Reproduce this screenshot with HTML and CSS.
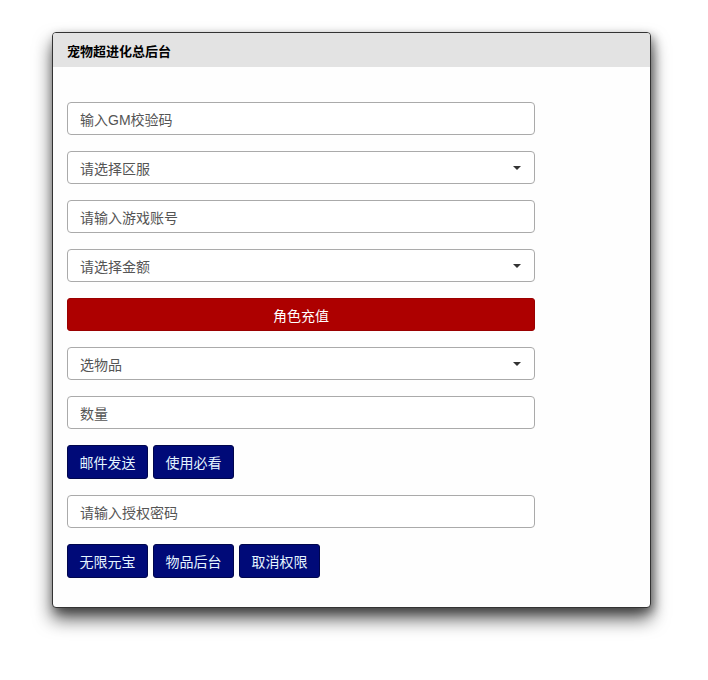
FILE: index.html
```html
<!DOCTYPE html>
<html lang="zh-CN">
<head>
  <meta charset="UTF-8">
  <meta name="viewport" content="width=device-width, initial-scale=1.0">
  <title>宠物超进化总后台</title>
  <link rel="stylesheet" href="styles.css">
</head>
<body>
  <div class="panel">
    <div class="panel-head">宠物超进化总后台</div>
    <div class="panel-body">
      <div class="field">输入GM校验码</div>
      <div class="field select"><span>请选择区服</span><i class="caret"></i></div>
      <div class="field">请输入游戏账号</div>
      <div class="field select"><span>请选择金额</span><i class="caret"></i></div>
      <div class="btn-red">角色充值</div>
      <div class="field select"><span>选物品</span><i class="caret"></i></div>
      <div class="field">数量</div>
      <div class="btn-row">
        <div class="btn">邮件发送</div>
        <div class="btn">使用必看</div>
      </div>
      <div class="field">请输入授权密码</div>
      <div class="btn-row">
        <div class="btn">无限元宝</div>
        <div class="btn">物品后台</div>
        <div class="btn">取消权限</div>
      </div>
    </div>
  </div>
</body>
</html>
```
FILE: styles.css
```css
* {
  padding: 0;
  margin: 0;
  box-sizing: border-box;
}

html,
body {
  height: 100%;
}

body {
  background: #ffffff;
  font-family: "Liberation Sans", "Noto Sans CJK SC", sans-serif;
  font-size: 14px;
  padding-top: 32px;
}

.panel {
  width: 599px;
  height: 576px;
  margin-left: 52px;
  background: #fefefe;
  border: 1px solid #333;
  border-radius: 4px;
  box-shadow: 0 11px 18px rgba(0, 0, 0, .65), 3px 4px 10px rgba(0, 0, 0, .35);
}

.panel-head {
  height: 34px;
  background: #e3e3e3;
  border-radius: 3px 3px 0 0;
  padding-left: 14px;
  display: flex;
  align-items: center;
  font-size: 13px;
  font-weight: bold;
  color: #000;
}

.panel-body {
  padding: 35px 0 0 14px;
  display: flex;
  flex-direction: column;
  gap: 16px;
}

.field {
  width: 468px;
  height: 33px;
  border: 1px solid #aaa;
  border-radius: 4px;
  background: #fff;
  color: #555;
  padding: 0 12px;
  display: flex;
  align-items: center;
}

.select {
  justify-content: space-between;
}

.caret {
  width: 0;
  height: 0;
  margin-right: 1px;
  border-left: 4px solid transparent;
  border-right: 4px solid transparent;
  border-top: 4px solid #333;
}

.btn-red {
  width: 468px;
  height: 33px;
  background: #ad0000;
  border: 1px solid #9a0000;
  border-radius: 3px;
  color: #fff;
  display: flex;
  align-items: center;
  justify-content: center;
}

.btn-row {
  display: flex;
  gap: 5px;
}

.btn {
  height: 34px;
  padding: 0 11.5px;
  background: #000a78;
  border: 1px solid #00064d;
  border-radius: 3px;
  color: #e4f4ff;
  display: flex;
  align-items: center;
}
```
